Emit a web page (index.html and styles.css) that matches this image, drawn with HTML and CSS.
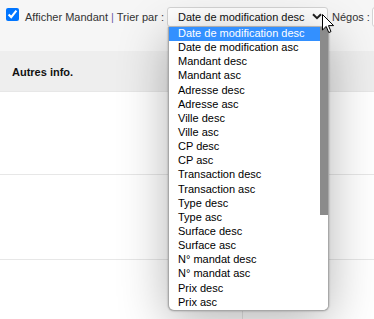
FILE: index.html
```html
<!DOCTYPE html>
<html lang="fr">
<head>
    <meta charset="UTF-8">
    <title>Biens</title>
    <link rel="stylesheet" href="styles.css">
</head>
<body>
    <div class="toolbar">
        <input type="checkbox" class="check" checked>
        <span class="label">Afficher Mandant <span class="sep">|</span> Trier par :</span>
        <div class="select">
            <span>Date de modification desc</span>
            <svg class="chevron" width="10" height="7" viewBox="0 0 10 7"><path d="M1 1.2 L5 5.2 L9 1.2" fill="none" stroke="#222" stroke-width="2"/></svg>
        </div>
        <span class="label negos">Négos :</span>
        <div class="select small"></div>
    </div>

    <div class="grid">
        <div class="cell head">Autres info.</div>
        <div class="cell head"></div>
        <div class="cell row1"></div>
        <div class="cell row1"></div>
        <div class="cell row2"></div>
        <div class="cell row2"></div>
        <div class="cell row3"></div>
        <div class="cell row3"></div>
    </div>

    <!-- liste ouverte du tri -->
    <div class="dropdown">
        <ul class="options">
            <li class="active">Date de modification desc</li>
            <li>Date de modification asc</li>
            <li>Mandant desc</li>
            <li>Mandant asc</li>
            <li>Adresse desc</li>
            <li>Adresse asc</li>
            <li>Ville desc</li>
            <li>Ville asc</li>
            <li>CP desc</li>
            <li>CP asc</li>
            <li>Transaction desc</li>
            <li>Transaction asc</li>
            <li>Type desc</li>
            <li>Type asc</li>
            <li>Surface desc</li>
            <li>Surface asc</li>
            <li>N° mandat desc</li>
            <li>N° mandat asc</li>
            <li>Prix desc</li>
            <li>Prix asc</li>
        </ul>
        <div class="scrollbar"><div class="thumb"></div></div>
    </div>

    <svg class="cursor" width="13" height="20" viewBox="0 0 13 20">
        <path d="M0.5 0.5 L0.5 16 L4.2 12.4 L6.8 18.6 L9 17.6 L6.5 11.6 L11.6 11.6 Z" fill="#fff" stroke="#000" stroke-width="1"/>
    </svg>
</body>
</html>
```

FILE: styles.css
```css
* {
    box-sizing: border-box;
}

body {
    margin: 0;
    font-family: 'Liberation Sans', Arial, sans-serif;
    font-size: 11px;
    color: #333;
    background: #fff;
    overflow: hidden;
}

.toolbar {
    height: 51px;
    background: #f6f6f6;
    display: flex;
    align-items: flex-start;
    padding: 7px 0 0 6px;
    white-space: nowrap;
    overflow: hidden;
}

.check {
    width: 13px;
    height: 13px;
    margin: 1px 6px 0 0;
    flex-shrink: 0;
    accent-color: #0075ff;
}

.label {
    line-height: 19px;
    margin-top: 1px;
    flex-shrink: 0;
}

.sep {
    color: #6b5aa8;
}

.select {
    margin-left: 3px;
    width: 161px;
    height: 20px;
    flex-shrink: 0;
    background: #fff;
    border: 1px solid #d4d4d4;
    border-radius: 3px;
    display: flex;
    align-items: center;
    justify-content: space-between;
    padding: 0 5px 0 10px;
    color: #111;
    font-size: 11px;
}

.chevron {
    margin-top: -2px;
}

.negos {
    margin-left: 4px;
}

.select.small {
    width: 40px;
    margin-left: 2px;
}

.grid {
    display: grid;
    grid-template-columns: 243px 1fr;
}

.cell {
    border-bottom: 1px solid #e7e7e7;
}

.cell:nth-child(odd) {
    border-right: 1px solid #e7e7e7;
}

.head {
    height: 41px;
    background: #eee;
    font-weight: bold;
    color: #111;
    padding: 15px 0 0 12px;
    border-right: none !important;
}

.row1 {
    height: 83px;
}

.row2 {
    height: 85px;
}

.row3 {
    height: 60px;
}

.dropdown {
    position: absolute;
    left: 168px;
    top: 27px;
    width: 161px;
    height: 284px;
    background: #fff;
    border: 1px solid #a8a8a8;
    border-top: none;
    border-radius: 0 0 6px 6px;
    box-shadow: 0 0 2px rgba(0, 0, 0, 0.35), 0 10px 50px rgba(0, 0, 0, 0.3);
    display: flex;
    overflow: hidden;
}

.options {
    list-style: none;
    margin: 0;
    padding: 0;
    flex: 1;
}

.options li {
    height: 14.15px;
    line-height: 13px;
    padding-left: 9px;
    color: #000;
}

.options li.active {
    background: #3390ff;
    color: #fff;
}

.scrollbar {
    width: 8px;
    background: #fff;
}

.thumb {
    height: 188px;
    background: #8b8b8b;
}

.cursor {
    position: absolute;
    left: 322px;
    top: 14px;
}
```
